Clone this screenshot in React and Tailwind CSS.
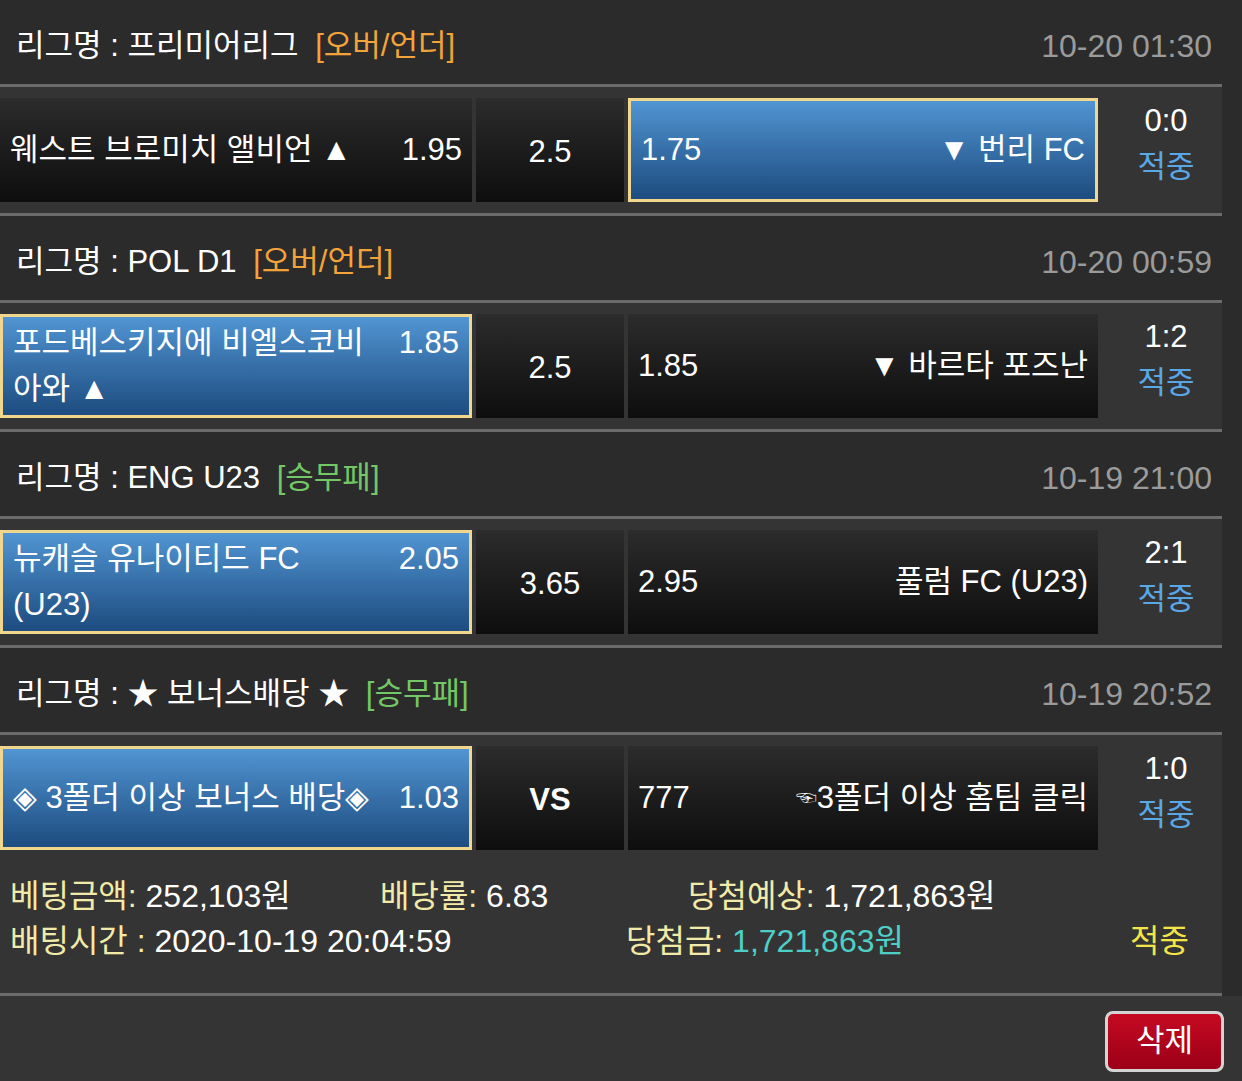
import React from 'react';

const ORANGE = 'text-[#f3a33a]';
const GREEN = 'text-[#74c766]';

const matches = [
    {
        league: '프리미어리그',
        tag: '[오버/언더]',
        tagClass: ORANGE,
        date: '10-20 01:30',
        home: ['웨스트 브로미치 앨비언 ▲'],
        homeOdds: '1.95',
        mid: '2.5',
        awayOdds: '1.75',
        away: '▼ 번리 FC',
        score: '0:0',
        pick: 'away',
    },
    {
        league: 'POL D1',
        tag: '[오버/언더]',
        tagClass: ORANGE,
        date: '10-20 00:59',
        home: ['포드베스키지에 비엘스코비', '아와 ▲'],
        homeOdds: '1.85',
        mid: '2.5',
        awayOdds: '1.85',
        away: '▼ 바르타 포즈난',
        score: '1:2',
        pick: 'home',
    },
    {
        league: 'ENG U23',
        tag: '[승무패]',
        tagClass: GREEN,
        date: '10-19 21:00',
        home: ['뉴캐슬 유나이티드 FC', '(U23)'],
        homeOdds: '2.05',
        mid: '3.65',
        awayOdds: '2.95',
        away: '풀럼 FC (U23)',
        score: '2:1',
        pick: 'home',
    },
    {
        league: '★ 보너스배당 ★',
        tag: '[승무패]',
        tagClass: GREEN,
        date: '10-19 20:52',
        home: ['◈ 3폴더 이상 보너스 배당◈'],
        homeOdds: '1.03',
        mid: 'VS',
        awayOdds: '777',
        away: (
            <>
                <span className="text-[21px] align-[3px]">☜</span>3폴더 이상 홈팀 클릭
            </>
        ),
        score: '1:0',
        pick: 'home',
    },
];

const darkCell = 'bg-gradient-to-b from-[#2c2c2c] to-[#0e0e0e]';
const pickedCell = 'bg-gradient-to-b from-[#5195d3] to-[#1d4c7f] border-[3px] border-[#f1d68d]';

const Line = () => <div className="h-[3px] bg-[#6b6b6b]" />;

const MatchBlock = ({ m }) => (
    <>
        {/* 리그 헤더 */}
        <div className="h-[84px] flex items-center justify-between pt-[8px] pl-[16px] pr-[10px] bg-[#2b2b2b]">
            <div className="text-white">
                리그명 : {m.league} <span className={`ml-[8px] ${m.tagClass}`}>{m.tag}</span>
            </div>
            <div className="text-[#9b9b9b] text-[32px]">{m.date}</div>
        </div>
        <Line />
        {/* 경기 */}
        <div className="h-[126px] py-[11px] flex bg-[#343434]">
            <div
                className={`w-[472px] flex items-center px-[10px] ${
                    m.pick === 'home' ? pickedCell : darkCell
                }`}
            >
                <div className="flex w-full justify-between items-start leading-[46px]">
                    <div className="whitespace-nowrap">
                        {m.home.map((l, i) => (
                            <div key={i}>{l}</div>
                        ))}
                    </div>
                    <div>{m.homeOdds}</div>
                </div>
            </div>
            <div
                className={`w-[148px] ml-[4px] flex items-center justify-center pt-[4px] ${darkCell} ${
                    m.mid === 'VS' ? 'font-bold' : ''
                }`}
            >
                {m.mid}
            </div>
            <div
                className={`w-[470px] ml-[4px] flex items-center justify-between px-[10px] ${
                    m.pick === 'away' ? pickedCell : darkCell
                }`}
            >
                <div>{m.awayOdds}</div>
                <div className="whitespace-nowrap">{m.away}</div>
            </div>
            <div className="flex-1 flex flex-col items-center justify-center pl-[12px] pb-[12px] leading-[46px]">
                <div>{m.score}</div>
                <div className="text-[#5aa7e6]">적중</div>
            </div>
        </div>
        <Line />
    </>
);

export default function App() {
    return (
        <div
            className="w-[1242px] h-[1081px] bg-[#2b2b2b] text-white text-[31px] overflow-hidden"
            style={{ fontFamily: '"Liberation Sans", "Noto Sans CJK KR", sans-serif' }}
        >
            <div className="w-[1222px]">
                {matches.map((m, i) => (
                    <MatchBlock key={i} m={m} />
                ))}
            </div>
            <div className="w-[1222px] -mt-[3px] bg-[#343434] h-[132px] pt-[13px] pl-[10px] leading-[45px] text-[32px]">
                <div className="flex">
                    <div className="w-[370px]">
                        <span className="text-[#f2eaa8]">베팅금액:</span> 252,103원
                    </div>
                    <div className="w-[308px]">
                        <span className="text-[#f2eaa8]">배당률:</span> 6.83
                    </div>
                    <div>
                        <span className="text-[#f2eaa8]">당첨예상:</span> 1,721,863원
                    </div>
                </div>
                <div className="flex">
                    <div className="w-[616px]">
                        <span className="text-[#f2eaa8]">배팅시간 :</span> 2020-10-19 20:04:59
                    </div>
                    <div className="w-[504px]">
                        <span className="text-[#f2eaa8]">당첨금:</span>{' '}
                        <span className="text-[#4ecfc6]">1,721,863원</span>
                    </div>
                    <div className="text-[#f3e44a]">적중</div>
                </div>
            </div>
            <div className="w-[1222px]">
                <Line />
            </div>
            <div className="bg-[#343434] h-[85px] flex justify-end items-start pt-[15px] pr-[18px]">
                <button
                    type="button"
                    className="w-[119px] h-[61px] rounded-[8px] border-[3px] border-[#d4d4d4] bg-gradient-to-b from-[#c50a22] to-[#9c0018] text-white text-[31px] flex items-center justify-center"
                >
                    삭제
                </button>
            </div>
        </div>
    );
}
